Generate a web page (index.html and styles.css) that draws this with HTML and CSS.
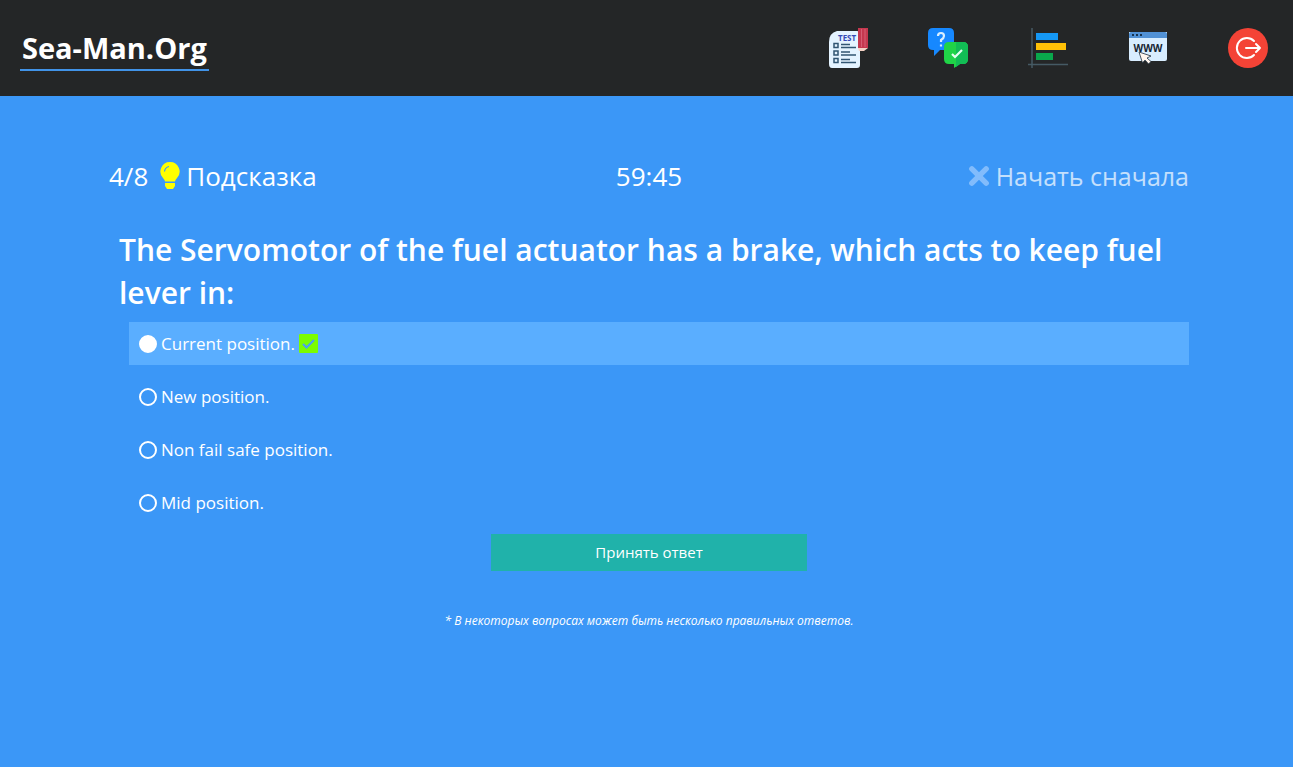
FILE: index.html
```html
<!DOCTYPE html>
<html lang="ru">
<head>
<meta charset="utf-8">
<meta name="viewport" content="width=device-width, initial-scale=1">
<title>Sea-Man.Org</title>
<link rel="stylesheet" href="styles.css">
</head>
<body>
<header class="header">
  <a class="brand" href="#">Sea-Man.Org</a>
  <nav class="menu">
    <a href="#" aria-label="Tests">
      <svg viewBox="0 0 40 40">
        <path d="M9 3H29Q32 3 32 6V37Q32 40 29 40H4Q1 40 1 36V14Q1 5 9 3Z" fill="#e4f3ff"/>
        <path d="M30 0H40V20H30Z" fill="#c5384f"/>
        <path d="M30 20H40L36 23H31Z" fill="#f5d2c5"/>
        <path d="M33.500 1V19M37 1V19" stroke="#d65e74" stroke-width="1"/>
        <text class="test-label" x="10" y="13">TEST</text>
        <g fill="none" stroke="#315572" stroke-width="1.5"><path d="M6 15.500h4v4H6zM6 23h4v4H6zM6 30.500h4v4H6z"/><path d="M13 16.500h9M13 19.500h15M13 24h9M13 27h15M13 31.500h9M13 34.500h15"/></g>
      </svg>
    </a>
    <a href="#" aria-label="Questions and answers">
      <svg viewBox="0 0 40 40">
        <path d="M5 0H21Q26 0 26 5V17Q26 22 21 22H12L6 28V22H5Q0 22 0 17V5Q0 0 5 0Z" fill="#1688ff"/>
        <path d="M10 8Q10 5 13 5Q16 5 16 8Q16 10 13 12V14M13 16.500V18.500" fill="none" stroke="#d9efff" stroke-width="2.200"/>
        <path d="M21 14H35Q40 14 40 19V31Q40 36 35 36H32L26 40V36H21Q16 36 16 31V19Q16 14 21 14Z" fill="#20d447"/>
        <path d="M28 14H35Q40 14 40 19V31Q40 36 35 36H32L28 39Z" fill="#12bd55"/>
        <path d="M24 26L27 29L34 22" fill="none" stroke="#e5fff0" stroke-width="2.200"/>
      </svg>
    </a>
    <a href="#" aria-label="Statistics">
      <svg viewBox="0 0 40 40">
        <path d="M4 0V40M0 36.500H40" stroke="#455a64" stroke-width="1.500"/>
        <path d="M8 5H30V12H8Z" fill="#1598f5"/><path d="M8 15H38V22H8Z" fill="#ffc107"/><path d="M8 25H25V32H8Z" fill="#09a84c"/>
      </svg>
    </a>
    <a href="#" aria-label="Website">
      <svg viewBox="0 0 40 40">
        <path d="M1 4H39V31Q39 33 37 33H3Q1 33 1 31Z" fill="#d8edff"/>
        <path d="M1 10V6Q1 4 3 4H37Q39 4 39 6V10Z" fill="#5191d5"/>
        <path d="M4 7H6M8 7H10M12 7H14" stroke="#17334f" stroke-width="2"/>
        <text class="www-label" x="20" y="24" text-anchor="middle">WWW</text>
        <path d="M11 24L23 28L19 30L23 33.500L20.500 36L17 32L14.500 35Z" fill="#fff5ee" stroke="#1c2c3a" stroke-width=".8"/>
      </svg>
    </a>
    <a href="#" aria-label="Log out">
      <svg viewBox="0 0 40 40">
        <circle cx="20" cy="20" r="20" fill="#f44336"/>
        <path d="M26 13A10 10 0 1 0 26 27M18 20H32M28 16L32 20L28 24" fill="none" stroke="#fff" stroke-width="2" stroke-linecap="round" stroke-linejoin="round"/>
      </svg>
    </a>
  </nav>
</header>
<main class="quiz">
  <div class="status">
    <div class="progress">
      <span>4/8</span>
      <button class="hint" type="button">
        <svg class="bulb" viewBox="0 0 20 28"><path d="M10 0A9.500 9.500 0 0 0 3 16Q5 18 5 19.500H15Q15 18 17 16A9.500 9.500 0 0 0 10 0ZM5 21H15V24L13 27H7L5 24Z" fill="#ff0"/><path d="M4.500 9.500Q5 5.500 9 4.500" fill="none" stroke="#3b97f7" stroke-width="1.200"/></svg>Подсказка
      </button>
    </div>
    <time class="timer">59:45</time>
    <button class="restart" type="button">
      <svg class="cross" viewBox="0 0 20 20"><path d="M3.500 3.500L16.500 16.500M16.500 3.500L3.500 16.500" stroke="currentColor" stroke-width="5" stroke-linecap="round"/></svg>Начать сначала
    </button>
  </div>
  <form class="question">
    <h1 class="title">The Servomotor of the fuel actuator has a brake, which acts to keep fuel lever in:</h1>
    <div class="answers">
      <label class="answer"><input type="radio" name="answer" checked><span>Current position.</span>
        <svg class="correct" viewBox="0 0 19 19"><rect width="19" height="19" rx="1" fill="#7cfc00"/><path d="M4 10L7.500 13.500L15 6" fill="none" stroke="#4ba0ee" stroke-width="2.200"/></svg>
      </label>
      <label class="answer"><input type="radio" name="answer"><span>New position.</span></label>
      <label class="answer"><input type="radio" name="answer"><span>Non fail safe position.</span></label>
      <label class="answer"><input type="radio" name="answer"><span>Mid position.</span></label>
    </div>
    <button class="submit" type="button">Принять ответ</button>
  </form>
  <p class="note">* В некоторых вопросах может быть несколько правильных ответов.</p>
</main>
</body>
</html>
```
FILE: styles.css
```css
* { box-sizing: border-box; }
body { margin: 0; min-height: 100vh; background: #3b97f7; color: #fff; font-family: "Open Sans", "Noto Sans", sans-serif; }
button { border: 0; padding: 0; background: none; color: inherit; font: inherit; cursor: pointer; }
.header { display: flex; align-items: center; justify-content: space-between; padding: 25px 25px 25px 20px; background: #242627; }
.brand { padding: 2px 2px 0; border-bottom: 2px solid #4193e8; color: #fff; font-size: 29px; line-height: 42px; font-weight: 700; text-decoration: none; }
.menu { display: flex; gap: 60px; }
.menu svg { display: block; width: 40px; height: 40px; }
.test-label { fill: #3649b5; font-size: 8px; font-weight: 700; }
.www-label { fill: #142331; font-size: 10px; font-weight: 700; }
.quiz { padding: 60px 104px 60px 109px; }
.status { display: grid; grid-template-columns: 1fr auto 1fr; align-items: center; font-size: 26px; line-height: 40px; }
.progress { display: flex; gap: 12px; }
.hint, .restart { display: flex; align-items: center; gap: 6px; }
.restart { justify-self: end; font-size: 25px; opacity: .7; }
.bulb { width: 20px; height: 28px; }
.cross { width: 22px; height: 22px; color: #a0cdff; }
.question { display: flex; flex-direction: column; padding: 32px 0 0 10px; }
.title { margin: 0 0 8px; font-size: 30px; line-height: 43px; font-weight: 600; }
.answers { display: grid; gap: 10px; padding-left: 10px; }
.answer { display: flex; align-items: center; gap: 4px; padding: 8px 10px; font-size: 17px; line-height: 27px; }
.answer:has(input:checked) { background: #5aaeff; }
.answer input { appearance: none; width: 18px; height: 18px; margin: 0; border: 2px solid #fff; border-radius: 50%; }
.answer input:checked { background: #fff; }
.correct { width: 19px; height: 19px; }
.submit { align-self: center; width: 30%; max-width: 316px; margin: 10px 10px 0 0; background: #20b2aa; font-size: 15px; line-height: 37px; }
.note { margin: 40px 0 0; text-align: center; font-size: 12px; line-height: 20px; font-style: italic; }
```
